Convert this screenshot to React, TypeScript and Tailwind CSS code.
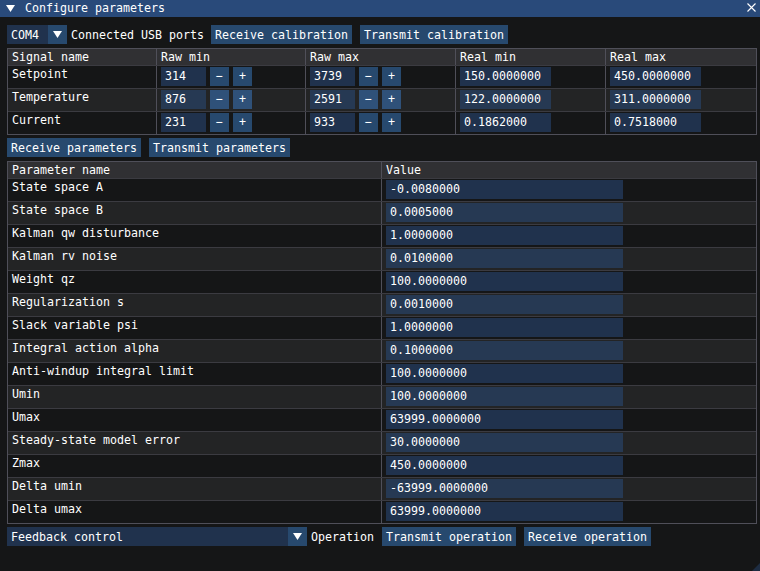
const signals = [
  { name: "Setpoint", rawMin: "314", rawMax: "3739", realMin: "150.0000000", realMax: "450.0000000" },
  { name: "Temperature", rawMin: "876", rawMax: "2591", realMin: "122.0000000", realMax: "311.0000000" },
  { name: "Current", rawMin: "231", rawMax: "933", realMin: "0.1862000", realMax: "0.7518000" },
];

const params = [
  ["State space A", "-0.0080000"],
  ["State space B", "0.0005000"],
  ["Kalman qw disturbance", "1.0000000"],
  ["Kalman rv noise", "0.0100000"],
  ["Weight qz", "100.0000000"],
  ["Regularization s", "0.0010000"],
  ["Slack variable psi", "1.0000000"],
  ["Integral action alpha", "0.1000000"],
  ["Anti-windup integral limit", "100.0000000"],
  ["Umin", "100.0000000"],
  ["Umax", "63999.0000000"],
  ["Steady-state model error", "30.0000000"],
  ["Zmax", "450.0000000"],
  ["Delta umin", "-63999.0000000"],
  ["Delta umax", "63999.0000000"],
];

function Arrow() {
  return (
    <svg width="9" height="7" viewBox="0 0 9 7" className="block">
      <polygon points="0,0 9,0 4.5,7" fill="#ffffff" />
    </svg>
  );
}

function Button({ label, w }: { label: string; w: string }) {
  return (
    <div className={`${w} h-[19px] shrink-0 px-[4px] pt-[4px] whitespace-pre bg-[#27496e]`}>
      {label}
    </div>
  );
}

function Combo({ value, w, textW }: { value: string; w: string; textW: string }) {
  return (
    <div className={`${w} h-[19px] flex shrink-0`}>
      <div className={`${textW} h-full bg-[#20324d] px-[4px] pt-[4px] whitespace-pre`}>{value}</div>
      <div className="w-[19px] h-full bg-[#27496e] pl-[5px] pt-[6px]">
        <Arrow />
      </div>
    </div>
  );
}

function Field({ value, w, alt }: { value: string; w: string; alt?: boolean }) {
  return (
    <div className={`${w} h-[19px] shrink-0 px-[4px] pt-[3px] whitespace-pre ${alt ? "bg-[#263953]" : "bg-[#20324d]"}`}>
      {value}
    </div>
  );
}

function Stepper({ value, alt }: { value: string; alt?: boolean }) {
  const btn = `w-[19px] h-[19px] flex justify-center pt-[3px] ${alt ? "bg-[#2f5179]" : "bg-[#27496e]"}`;
  return (
    <div className="flex gap-[4px] pt-[1px] pl-[4px]">
      <Field value={value} w="w-[45px]" alt={alt} />
      <div className={btn}>−</div>
      <div className={btn}>+</div>
    </div>
  );
}

export default function App() {
  return (
    <div className="w-[760px] h-[571px] relative overflow-hidden bg-[#151617] text-white font-['DejaVu_Sans_Mono',monospace] text-[11.63px] leading-[13px]">
      {/* title bar */}
      <div className="h-[17px] bg-[#294a7a] flex items-start">
        <div className="ml-[6px] mt-[5px]">
          <Arrow />
        </div>
        <div className="ml-[10px] pt-[2px] whitespace-pre">Configure parameters</div>
        <svg width="9" height="9" viewBox="0 0 9 9" className="ml-auto mr-[4px] mt-[3px]">
          <path d="M0.5 0.5 L8.5 8.5 M8.5 0.5 L0.5 8.5" stroke="#ffffff" strokeWidth="1.1" />
        </svg>
      </div>

      <div className="pl-[7px] pt-[8px]">
        {/* calibration controls */}
        <div className="h-[19px] flex items-start">
          <Combo value="COM4" w="w-[60px]" textW="w-[41px]" />
          <div className="ml-[4px] pt-[4px] whitespace-pre">Connected USB ports</div>
          <div className="ml-[7px]">
            <Button label="Receive calibration" w="w-[141px]" />
          </div>
          <div className="ml-[8px]">
            <Button label="Transmit calibration" w="w-[148px]" />
          </div>
        </div>

        {/* calibration table */}
        <div className="mt-[4px] w-[750px] border border-[#4f4f59]">
          <div className="h-[16px] bg-[#303033] flex">
            <div className="w-[148px] pl-[4px] pt-[2px]">Signal name</div>
            <div className="w-[149px] border-l border-[#4f4f59] pl-[4px] pt-[2px]">Raw min</div>
            <div className="w-[150px] border-l border-[#4f4f59] pl-[4px] pt-[2px]">Raw max</div>
            <div className="w-[150px] border-l border-[#4f4f59] pl-[4px] pt-[2px]">Real min</div>
            <div className="w-[151px] border-l border-[#4f4f59] pl-[4px] pt-[2px]">Real max</div>
          </div>
          {signals.map((s, i) => {
            const alt = i % 2 === 1;
            return (
              <div key={s.name} className={`h-[23px] flex border-t border-[#3b3b41] ${alt ? "bg-[#232425]" : ""}`}>
                <div className="w-[148px] pl-[4px] pt-[2px]">{s.name}</div>
                <div className="w-[149px] border-l border-[#4f4f59]">
                  <Stepper value={s.rawMin} alt={alt} />
                </div>
                <div className="w-[150px] border-l border-[#4f4f59]">
                  <Stepper value={s.rawMax} alt={alt} />
                </div>
                <div className="w-[150px] border-l border-[#4f4f59] pl-[4px] pt-[1px]">
                  <Field value={s.realMin} w="w-[91px]" alt={alt} />
                </div>
                <div className="w-[151px] border-l border-[#4f4f59] pl-[4px] pt-[1px]">
                  <Field value={s.realMax} w="w-[91px]" alt={alt} />
                </div>
              </div>
            );
          })}
        </div>

        {/* parameter buttons */}
        <div className="mt-[3px] h-[19px] flex gap-[8px]">
          <Button label="Receive parameters" w="w-[134px]" />
          <Button label="Transmit parameters" w="w-[141px]" />
        </div>

        {/* parameter table */}
        <div className="mt-[4px] w-[750px] border border-[#4f4f59]">
          <div className="h-[16px] bg-[#303033] flex">
            <div className="w-[373px] pl-[4px] pt-[2px]">Parameter name</div>
            <div className="w-[375px] border-l border-[#4f4f59] pl-[4px] pt-[2px]">Value</div>
          </div>
          {params.map(([name, value], i) => {
            const alt = i % 2 === 1;
            return (
              <div key={name} className={`h-[23px] flex border-t border-[#3b3b41] ${alt ? "bg-[#232425]" : ""}`}>
                <div className="w-[373px] pl-[4px] pt-[2px] whitespace-pre">{name}</div>
                <div className="w-[375px] border-l border-[#4f4f59] pl-[4px] pt-[1px]">
                  <Field value={value} w="w-[237px]" alt={alt} />
                </div>
              </div>
            );
          })}
        </div>

        {/* operation controls */}
        <div className="mt-[3px] h-[19px] flex items-start">
          <Combo value="Feedback control" w="w-[300px]" textW="w-[281px]" />
          <div className="ml-[4px] pt-[4px] whitespace-pre">Operation</div>
          <div className="ml-[8px]">
            <Button label="Transmit operation" w="w-[134px]" />
          </div>
          <div className="ml-[8px]">
            <Button label="Receive operation" w="w-[127px]" />
          </div>
        </div>
      </div>

      {/* resize grip */}
      <svg width="8" height="8" viewBox="0 0 8 8" className="absolute right-0 bottom-0">
        <polygon points="8,0 8,8 0,8" fill="#1d2c42" />
      </svg>
    </div>
  );
}
